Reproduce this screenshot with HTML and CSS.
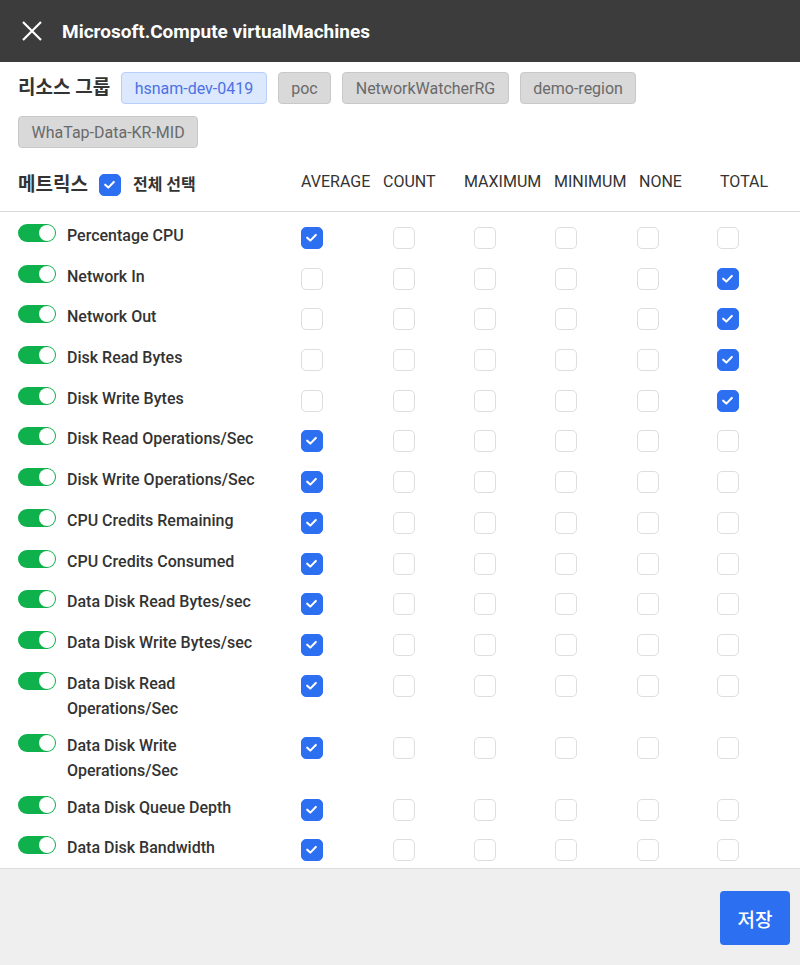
FILE: index.html
```html
<!DOCTYPE html>
<html lang="ko">
<head>
<meta charset="utf-8">
<title>Microsoft.Compute virtualMachines</title>
<link rel="stylesheet" href="styles.css">
</head>
<body>
<div class="app">
  <header class="topbar">
    <svg class="close" width="20" height="20" viewBox="0 0 20 20"><path d="M1 1 L19 19 M19 1 L1 19" stroke="#fff" stroke-width="2.2" fill="none"/></svg>
    <h1 class="title">Microsoft.Compute virtualMachines</h1>
  </header>

  <main class="content">
    <div class="groups">
      <span class="group-label">리소스 그룹</span>
      <span class="chip chip-active">hsnam-dev-0419</span>
      <span class="chip">poc</span>
      <span class="chip">NetworkWatcherRG</span>
      <span class="chip">demo-region</span>
      <span class="chip">WhaTap-Data-KR-MID</span>
    </div>

    <div class="metrics-head">
      <div class="mh-left">
        <span class="mh-label">메트릭스</span>
        <span class="cb on"><svg viewBox="0 0 22 22"><path d="M6 11.2 L9.6 14.6 L16 8" /></svg></span>
        <span class="mh-all">전체 선택</span>
      </div>
      <span class="col-h">AVERAGE</span>
      <span class="col-h">COUNT</span>
      <span class="col-h">MAXIMUM</span>
      <span class="col-h">MINIMUM</span>
      <span class="col-h">NONE</span>
      <span class="col-h">TOTAL</span>
    </div>

    <div class="rows">
      <div class="row"><div class="name"><span class="toggle"></span><span class="label">Percentage CPU</span></div><div class="cell"><span class="cb on"><svg viewBox="0 0 22 22"><path d="M6 11.2 L9.6 14.6 L16 8"/></svg></span></div><div class="cell"><span class="cb"></span></div><div class="cell"><span class="cb"></span></div><div class="cell"><span class="cb"></span></div><div class="cell"><span class="cb"></span></div><div class="cell"><span class="cb"></span></div></div>

      <div class="row"><div class="name"><span class="toggle"></span><span class="label">Network In</span></div><div class="cell"><span class="cb"></span></div><div class="cell"><span class="cb"></span></div><div class="cell"><span class="cb"></span></div><div class="cell"><span class="cb"></span></div><div class="cell"><span class="cb"></span></div><div class="cell"><span class="cb on"><svg viewBox="0 0 22 22"><path d="M6 11.2 L9.6 14.6 L16 8"/></svg></span></div></div>

      <div class="row"><div class="name"><span class="toggle"></span><span class="label">Network Out</span></div><div class="cell"><span class="cb"></span></div><div class="cell"><span class="cb"></span></div><div class="cell"><span class="cb"></span></div><div class="cell"><span class="cb"></span></div><div class="cell"><span class="cb"></span></div><div class="cell"><span class="cb on"><svg viewBox="0 0 22 22"><path d="M6 11.2 L9.6 14.6 L16 8"/></svg></span></div></div>

      <div class="row"><div class="name"><span class="toggle"></span><span class="label">Disk Read Bytes</span></div><div class="cell"><span class="cb"></span></div><div class="cell"><span class="cb"></span></div><div class="cell"><span class="cb"></span></div><div class="cell"><span class="cb"></span></div><div class="cell"><span class="cb"></span></div><div class="cell"><span class="cb on"><svg viewBox="0 0 22 22"><path d="M6 11.2 L9.6 14.6 L16 8"/></svg></span></div></div>

      <div class="row"><div class="name"><span class="toggle"></span><span class="label">Disk Write Bytes</span></div><div class="cell"><span class="cb"></span></div><div class="cell"><span class="cb"></span></div><div class="cell"><span class="cb"></span></div><div class="cell"><span class="cb"></span></div><div class="cell"><span class="cb"></span></div><div class="cell"><span class="cb on"><svg viewBox="0 0 22 22"><path d="M6 11.2 L9.6 14.6 L16 8"/></svg></span></div></div>

      <div class="row"><div class="name"><span class="toggle"></span><span class="label">Disk Read Operations/Sec</span></div><div class="cell"><span class="cb on"><svg viewBox="0 0 22 22"><path d="M6 11.2 L9.6 14.6 L16 8"/></svg></span></div><div class="cell"><span class="cb"></span></div><div class="cell"><span class="cb"></span></div><div class="cell"><span class="cb"></span></div><div class="cell"><span class="cb"></span></div><div class="cell"><span class="cb"></span></div></div>

      <div class="row"><div class="name"><span class="toggle"></span><span class="label">Disk Write Operations/Sec</span></div><div class="cell"><span class="cb on"><svg viewBox="0 0 22 22"><path d="M6 11.2 L9.6 14.6 L16 8"/></svg></span></div><div class="cell"><span class="cb"></span></div><div class="cell"><span class="cb"></span></div><div class="cell"><span class="cb"></span></div><div class="cell"><span class="cb"></span></div><div class="cell"><span class="cb"></span></div></div>

      <div class="row"><div class="name"><span class="toggle"></span><span class="label">CPU Credits Remaining</span></div><div class="cell"><span class="cb on"><svg viewBox="0 0 22 22"><path d="M6 11.2 L9.6 14.6 L16 8"/></svg></span></div><div class="cell"><span class="cb"></span></div><div class="cell"><span class="cb"></span></div><div class="cell"><span class="cb"></span></div><div class="cell"><span class="cb"></span></div><div class="cell"><span class="cb"></span></div></div>

      <div class="row"><div class="name"><span class="toggle"></span><span class="label">CPU Credits Consumed</span></div><div class="cell"><span class="cb on"><svg viewBox="0 0 22 22"><path d="M6 11.2 L9.6 14.6 L16 8"/></svg></span></div><div class="cell"><span class="cb"></span></div><div class="cell"><span class="cb"></span></div><div class="cell"><span class="cb"></span></div><div class="cell"><span class="cb"></span></div><div class="cell"><span class="cb"></span></div></div>

      <div class="row"><div class="name"><span class="toggle"></span><span class="label">Data Disk Read Bytes/sec</span></div><div class="cell"><span class="cb on"><svg viewBox="0 0 22 22"><path d="M6 11.2 L9.6 14.6 L16 8"/></svg></span></div><div class="cell"><span class="cb"></span></div><div class="cell"><span class="cb"></span></div><div class="cell"><span class="cb"></span></div><div class="cell"><span class="cb"></span></div><div class="cell"><span class="cb"></span></div></div>

      <div class="row"><div class="name"><span class="toggle"></span><span class="label">Data Disk Write Bytes/sec</span></div><div class="cell"><span class="cb on"><svg viewBox="0 0 22 22"><path d="M6 11.2 L9.6 14.6 L16 8"/></svg></span></div><div class="cell"><span class="cb"></span></div><div class="cell"><span class="cb"></span></div><div class="cell"><span class="cb"></span></div><div class="cell"><span class="cb"></span></div><div class="cell"><span class="cb"></span></div></div>

      <div class="row"><div class="name"><span class="toggle"></span><span class="label">Data Disk Read Operations/Sec</span></div><div class="cell"><span class="cb on"><svg viewBox="0 0 22 22"><path d="M6 11.2 L9.6 14.6 L16 8"/></svg></span></div><div class="cell"><span class="cb"></span></div><div class="cell"><span class="cb"></span></div><div class="cell"><span class="cb"></span></div><div class="cell"><span class="cb"></span></div><div class="cell"><span class="cb"></span></div></div>

      <div class="row"><div class="name"><span class="toggle"></span><span class="label">Data Disk Write Operations/Sec</span></div><div class="cell"><span class="cb on"><svg viewBox="0 0 22 22"><path d="M6 11.2 L9.6 14.6 L16 8"/></svg></span></div><div class="cell"><span class="cb"></span></div><div class="cell"><span class="cb"></span></div><div class="cell"><span class="cb"></span></div><div class="cell"><span class="cb"></span></div><div class="cell"><span class="cb"></span></div></div>

      <div class="row"><div class="name"><span class="toggle"></span><span class="label">Data Disk Queue Depth</span></div><div class="cell"><span class="cb on"><svg viewBox="0 0 22 22"><path d="M6 11.2 L9.6 14.6 L16 8"/></svg></span></div><div class="cell"><span class="cb"></span></div><div class="cell"><span class="cb"></span></div><div class="cell"><span class="cb"></span></div><div class="cell"><span class="cb"></span></div><div class="cell"><span class="cb"></span></div></div>

      <div class="row"><div class="name"><span class="toggle"></span><span class="label">Data Disk Bandwidth</span></div><div class="cell"><span class="cb on"><svg viewBox="0 0 22 22"><path d="M6 11.2 L9.6 14.6 L16 8"/></svg></span></div><div class="cell"><span class="cb"></span></div><div class="cell"><span class="cb"></span></div><div class="cell"><span class="cb"></span></div><div class="cell"><span class="cb"></span></div><div class="cell"><span class="cb"></span></div></div>
    </div>
  </main>

  <footer class="footer">
    <button class="save">저장</button>
  </footer>
</div>
</body>
</html>
```

FILE: styles.css
```css
* { box-sizing: border-box; }
html, body {
  margin: 0;
  padding: 0;
  height: 965px;
  overflow: hidden;
  background: #fff;
  font-family: Roboto, "Noto Sans CJK KR", "Noto Sans", sans-serif;
  color: #333;
}
.app {
  display: flex;
  flex-direction: column;
  height: 965px;
}
.topbar {
  height: 62px;
  flex: none;
  background: #3c3c3c;
  display: flex;
  align-items: center;
  padding-left: 22px;
  gap: 20px;
}
.close { display: block; margin-top: -1px; }
.title {
  margin: 0;
  color: #fff;
  font-size: 19px;
  font-weight: 700;
}
.content {
  flex: 1;
  overflow: hidden;
}
.groups {
  display: flex;
  flex-wrap: wrap;
  align-items: center;
  gap: 12px 11px;
  padding: 10px 18px 0;
}
.group-label {
  font-size: 19px;
  font-weight: 700;
  color: #333;
  line-height: 32px;
}
.chip {
  height: 32px;
  padding: 0 12.5px;
  display: inline-flex;
  align-items: center;
  font-size: 16px;
  color: #6a6a6a;
  background: #d9d9d9;
  border: 1px solid #c8c8c8;
  border-radius: 4px;
}
.chip-active {
  background: #dce8fe;
  border-color: #b7cefa;
  color: #4d72e3;
}
.metrics-head {
  display: grid;
  grid-template-columns: 283px 82px 81px 90px 85px 81px 1fr;
  align-items: center;
  height: 64px;
  padding: 26px 18px 16px;
  border-bottom: 1px solid #d8d8d8;
}
.mh-left {
  display: flex;
  align-items: center;
  height: 22px;
}
.mh-label {
  font-size: 19px;
  font-weight: 700;
  line-height: 22px;
  margin-right: 11px;
}
.mh-all {
  font-size: 16px;
  font-weight: 700;
  line-height: 22px;
  margin-left: 12px;
}
.col-h {
  font-size: 16px;
  line-height: 16px;
  align-self: start;
  color: #333;
}
.rows {
  padding-top: 5px;
}
.row {
  display: grid;
  grid-template-columns: 283px 92px 81px 81px 82px 80px 1fr;
  align-items: start;
  padding: 6px 0 6px 18px;
}
.name {
  display: flex;
  align-items: flex-start;
  gap: 11px;
}
.toggle {
  flex: none;
  width: 38px;
  height: 18px;
  margin-top: 1px;
  border-radius: 9px;
  background: #0fb14c;
  position: relative;
}
.toggle::after {
  content: "";
  position: absolute;
  right: 1px;
  top: 1px;
  width: 16px;
  height: 16px;
  border-radius: 50%;
  background: #fff;
}
.label {
  width: 212px;
  font-size: 16px;
  font-weight: 500;
  line-height: 25px;
  color: #333;
}
.cell {
  height: 28.7px;
  padding-top: 4px;
}
.cb {
  display: block;
  width: 22px;
  height: 22px;
  border: 1.5px solid #dedede;
  border-radius: 5px;
  background: #fff;
}
.cb.on {
  background: #2d6ff1;
  border-color: #2d6ff1;
}
.cb svg {
  display: block;
  width: 19px;
  height: 19px;
}
.cb svg path {
  fill: none;
  stroke: #fff;
  stroke-width: 2.4;
  stroke-linecap: round;
  stroke-linejoin: round;
}
.mh-left .cb { flex: none; }
.footer {
  flex: none;
  height: 97px;
  border-top: 1px solid #dcdcdc;
  background: #efefef;
  display: flex;
  justify-content: flex-end;
  align-items: flex-start;
  padding: 22px 10px 0;
}
.save {
  width: 70px;
  height: 54px;
  border: none;
  border-radius: 4px;
  background: #2d6ff1;
  color: #fff;
  font-family: Roboto, "Noto Sans CJK KR", sans-serif;
  font-size: 19px;
  font-weight: 500;
}
```
